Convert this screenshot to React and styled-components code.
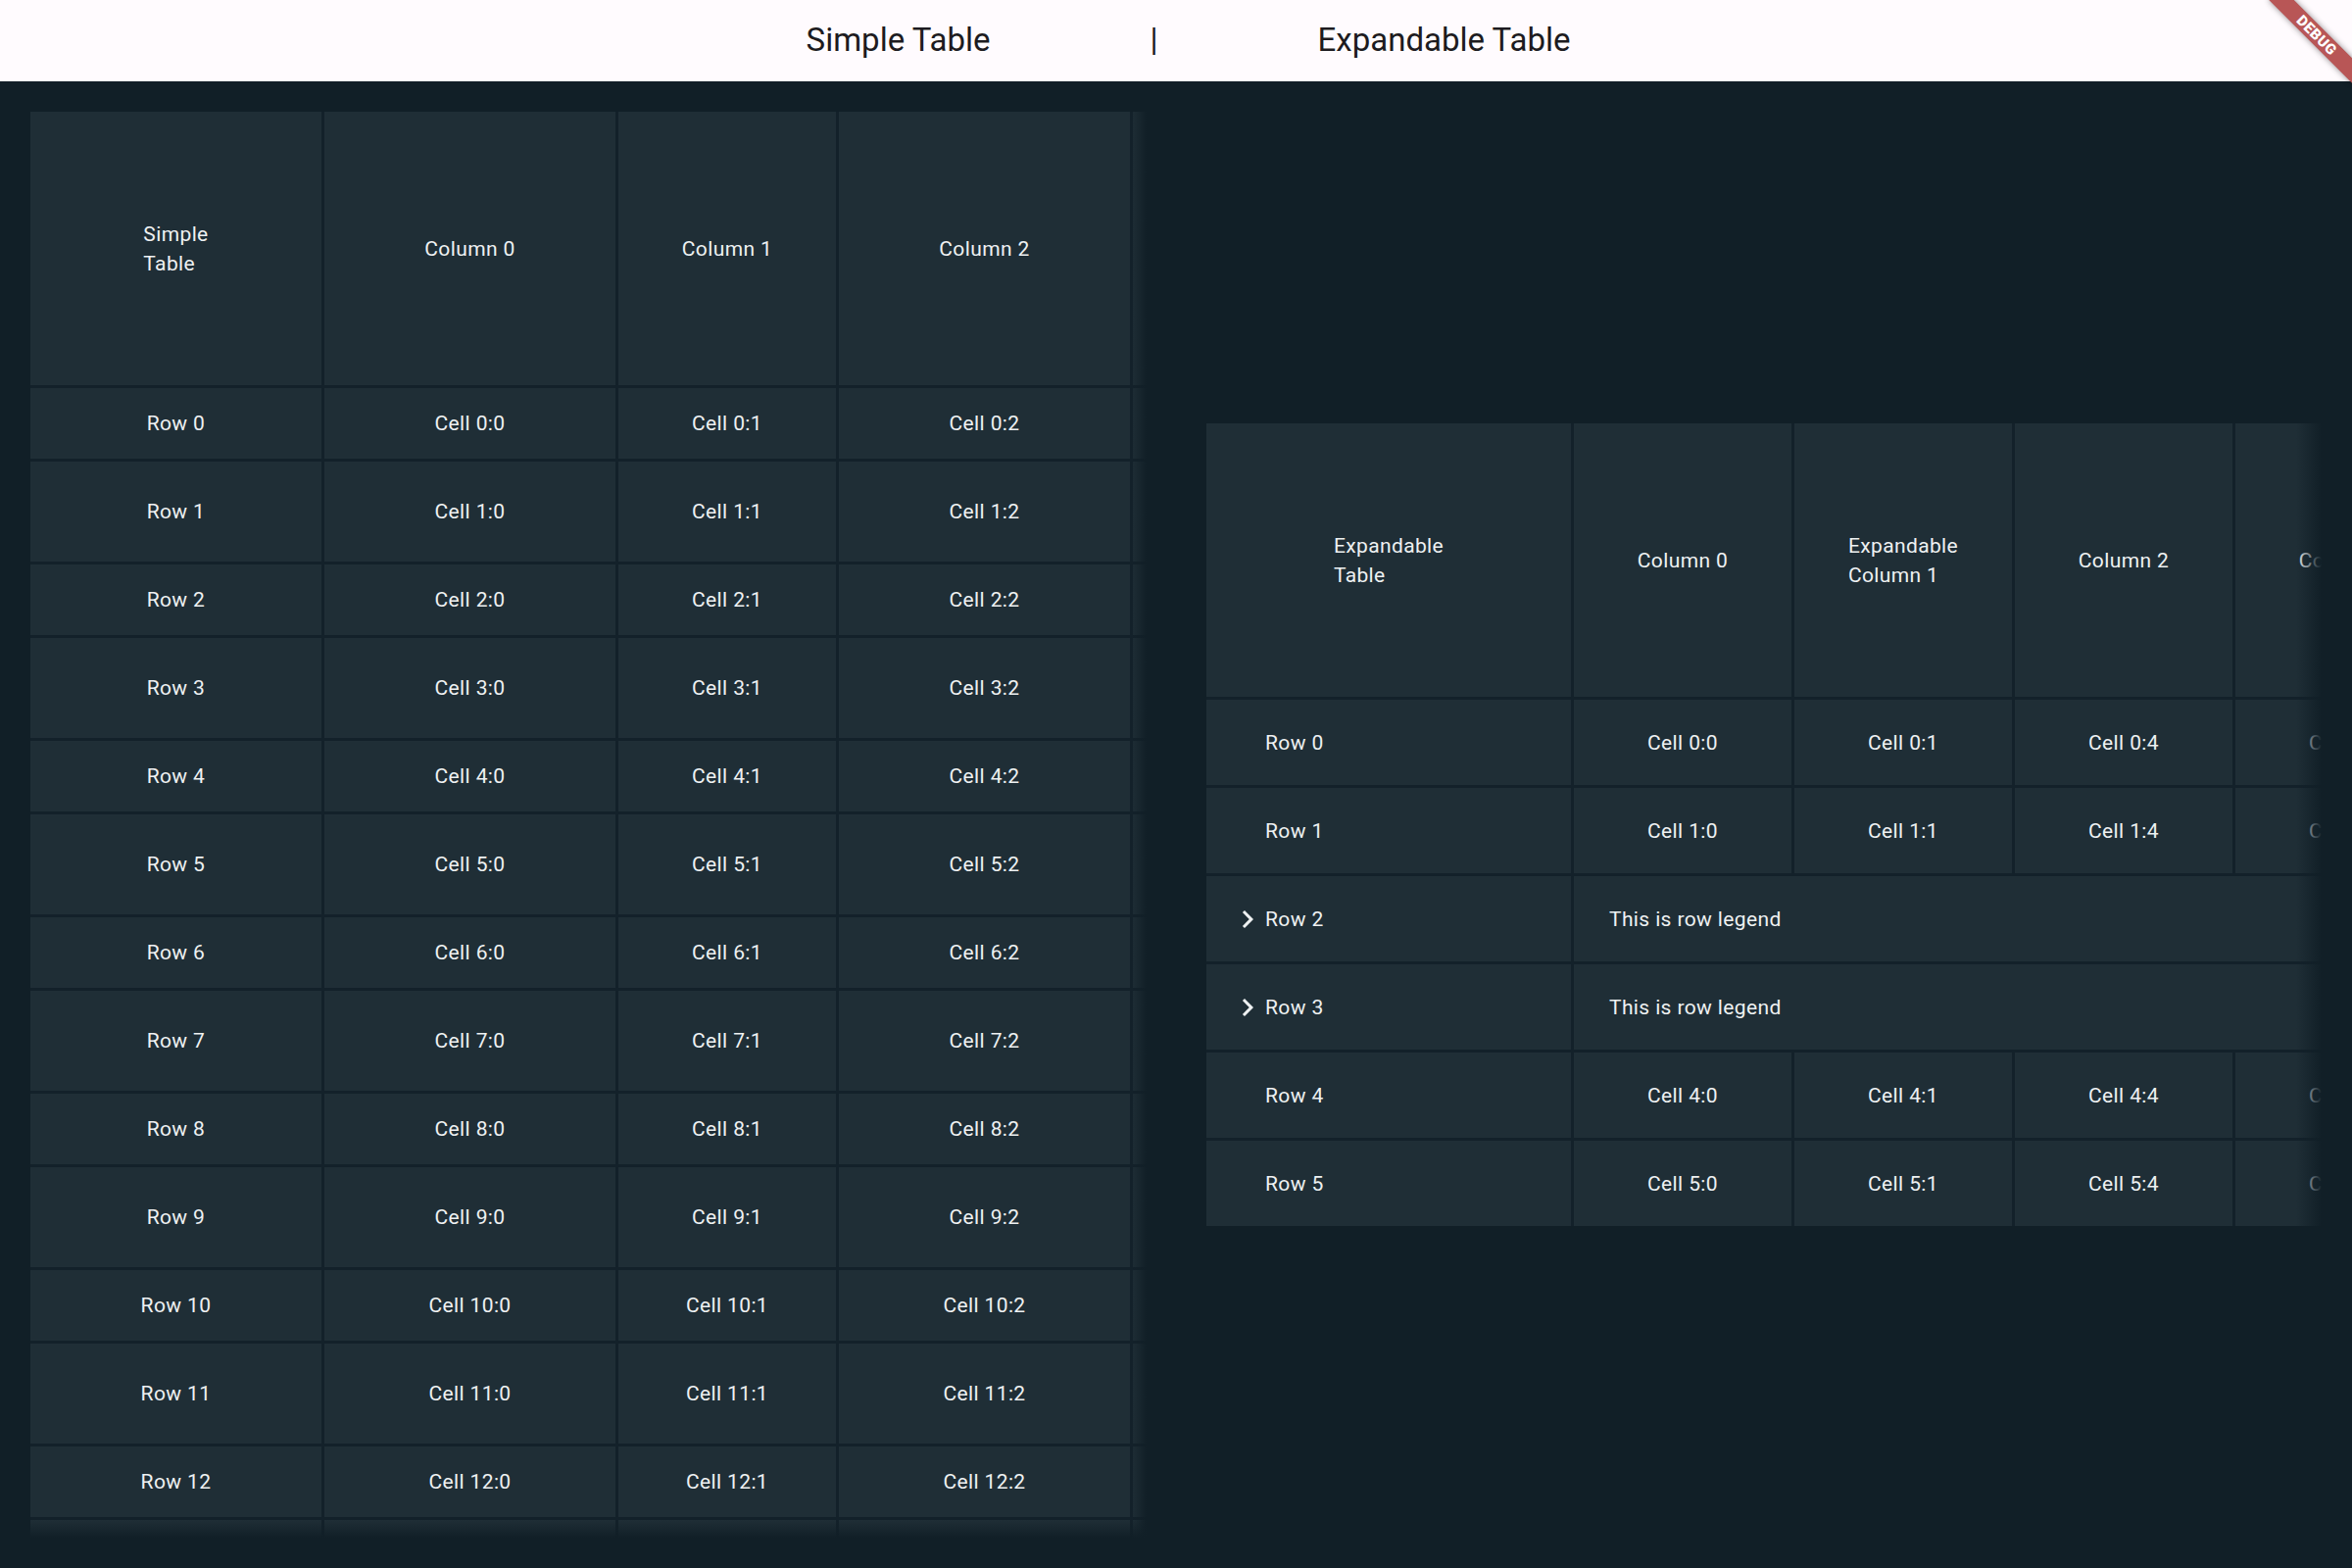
import styled, { createGlobalStyle } from "styled-components";

const colors = {
  page: "#111f27",
  cell: "#1f2e36",
  line: "#13212a",
  text: "#eef1f2",
  appBar: "#fffbfe",
  appBarText: "#1d1b20",
  banner: "#b85656",
};

const GlobalStyle = createGlobalStyle`
  html, body {
    margin: 0;
    padding: 0;
  }
  body {
    background: ${colors.page};
    font-family: Roboto, "Noto Sans", "Liberation Sans", sans-serif;
    overflow: hidden;
  }
`;

const Page = styled.div`
  position: relative;
  width: 100vw;
  height: 100vh;
  display: flex;
  flex-direction: column;
  overflow: hidden;
`;

const AppBar = styled.header`
  flex: 0 0 83px;
  background: ${colors.appBar};
  color: ${colors.appBarText};
  display: flex;
  align-items: center;
  justify-content: center;
  gap: 163px;
  padding-left: 25px;
  font-size: 33px;
  line-height: 1.17;
`;

const Tab = styled.span`
  white-space: nowrap;
`;

const Divider = styled.span`
  width: 8px;
  text-align: center;
`;

const DebugBanner = styled.div`
  position: absolute;
  top: 27px;
  right: -24px;
  width: 120px;
  height: 18px;
  transform: rotate(45deg);
  background: ${colors.banner};
  box-shadow: 0 0 6px rgba(0, 0, 0, 0.45);
  color: #fff;
  font-size: 15px;
  font-weight: 900;
  line-height: 18px;
  text-align: center;
  letter-spacing: 0.5px;
`;

const Body = styled.main`
  flex: 1 1 auto;
  min-height: 0;
  display: grid;
  grid-template-columns: minmax(0, 1fr) minmax(0, 1fr);
`;

const Pane = styled.section`
  min-height: 0;
  min-width: 0;
  display: flex;
  flex-direction: column;
  justify-content: ${(p) => (p.$center ? "center" : "flex-start")};
  padding: ${(p) => (p.$center ? "0 31px" : "31px 30px 31px 31px")};
`;

const Viewport = styled.div`
  position: relative;
  overflow: hidden;
  flex: ${(p) => (p.$fill ? "1 1 auto" : "0 0 auto")};
  min-height: 0;
  min-width: 0;

  &::after {
    content: "";
    position: absolute;
    top: 0;
    right: 0;
    bottom: 0;
    width: ${(p) => p.$fadeRight}px;
    background: linear-gradient(to right, rgba(17, 31, 39, 0), ${colors.page});
  }

  &::before {
    content: "";
    display: ${(p) => (p.$fill ? "block" : "none")};
    position: absolute;
    left: 0;
    right: 0;
    bottom: 0;
    height: 18px;
    z-index: 1;
    background: linear-gradient(to bottom, rgba(17, 31, 39, 0), ${colors.page});
  }
`;

const Grid = styled.div`
  display: grid;
  grid-template-columns: ${(p) => p.$columns};
  grid-template-rows: ${(p) => p.$rows};
  gap: 3px;
  width: max-content;
  background: ${colors.line};
`;

const Cell = styled.div`
  background: ${colors.cell};
  color: ${colors.text};
  font-size: 21px;
  line-height: 30px;
  letter-spacing: 0.375px;
  display: flex;
  align-items: center;
  justify-content: center;
  white-space: nowrap;
  overflow: hidden;
`;

const HeaderLabel = styled.span`
  display: inline-block;
  text-align: left;
  white-space: pre-line;
`;

const RowHead = styled(Cell)`
  justify-content: flex-start;
  padding-left: 24px;
`;

const IconSlot = styled.span`
  width: 36px;
  height: 36px;
  flex: 0 0 36px;
  display: inline-flex;
`;

const LegendCell = styled(Cell)`
  grid-column: 2 / -1;
  justify-content: flex-start;
  padding-left: 36px;
`;

const ChevronRight = () => (
  <svg width="36" height="36" viewBox="0 0 24 24" fill={colors.text}>
    <path d="M10 6L8.59 7.41 13.17 12l-4.58 4.59L10 18l6-6z" />
  </svg>
);

// the last column and row only peek into the viewport, so they stay blank
const simpleColumns = ["Column 0", "Column 1", "Column 2", ""];
const simpleRows = Array.from({ length: 14 }, (_, i) => i);
const lastSimpleRow = 13;

const expandableColumns = [
  { label: "Column 0", cell: 0 },
  { label: "Expandable\nColumn 1", cell: 1 },
  { label: "Column 2", cell: 4 },
  { label: "Column 3", cell: 5 },
];

const expandableRows = [
  { id: 0 },
  { id: 1 },
  { id: 2, legend: "This is row legend" },
  { id: 3, legend: "This is row legend" },
  { id: 4 },
  { id: 5 },
];

const SimpleTable = () => (
  <Viewport $fill $fadeRight={16}>
    <Grid
      $columns="297px 297px 222px 297px 297px"
      $rows={`279px repeat(${simpleRows.length / 2}, 72px 102px)`}
    >
      <Cell>
        <HeaderLabel>{"Simple\nTable"}</HeaderLabel>
      </Cell>
      {simpleColumns.map((col, c) => (
        <Cell key={`col${c}`}>
          <HeaderLabel>{col}</HeaderLabel>
        </Cell>
      ))}
      {simpleRows.map((r) => {
        const blank = r === lastSimpleRow;
        return [
          <Cell key={`h${r}`}>{blank ? "" : `Row ${r}`}</Cell>,
          ...simpleColumns.map((col, c) => (
            <Cell key={`${r}:${c}`}>{blank || !col ? "" : `Cell ${r}:${c}`}</Cell>
          )),
        ];
      })}
    </Grid>
  </Viewport>
);

const ExpandableTable = () => (
  <Viewport $fadeRight={26}>
    <Grid $columns="372px 222px 222px 222px 222px" $rows="279px repeat(6, 87px)">
      <Cell>
        <HeaderLabel>{"Expandable\nTable"}</HeaderLabel>
      </Cell>
      {expandableColumns.map((col) => (
        <Cell key={col.label}>
          <HeaderLabel>{col.label}</HeaderLabel>
        </Cell>
      ))}
      {expandableRows.map((row) => [
        <RowHead key={`h${row.id}`}>
          <IconSlot>{row.legend && <ChevronRight />}</IconSlot>
          Row {row.id}
        </RowHead>,
        row.legend ? (
          <LegendCell key={`l${row.id}`}>{row.legend}</LegendCell>
        ) : (
          expandableColumns.map((col) => (
            <Cell key={`${row.id}:${col.cell}`}>
              Cell {row.id}:{col.cell}
            </Cell>
          ))
        ),
      ])}
    </Grid>
  </Viewport>
);

export default function App() {
  return (
    <Page>
      <GlobalStyle />
      <AppBar>
        <Tab>Simple Table</Tab>
        <Divider>|</Divider>
        <Tab>Expandable Table</Tab>
      </AppBar>
      <Body>
        <Pane>
          <SimpleTable />
        </Pane>
        <Pane $center>
          <ExpandableTable />
        </Pane>
      </Body>
      <DebugBanner>DEBUG</DebugBanner>
    </Page>
  );
}
